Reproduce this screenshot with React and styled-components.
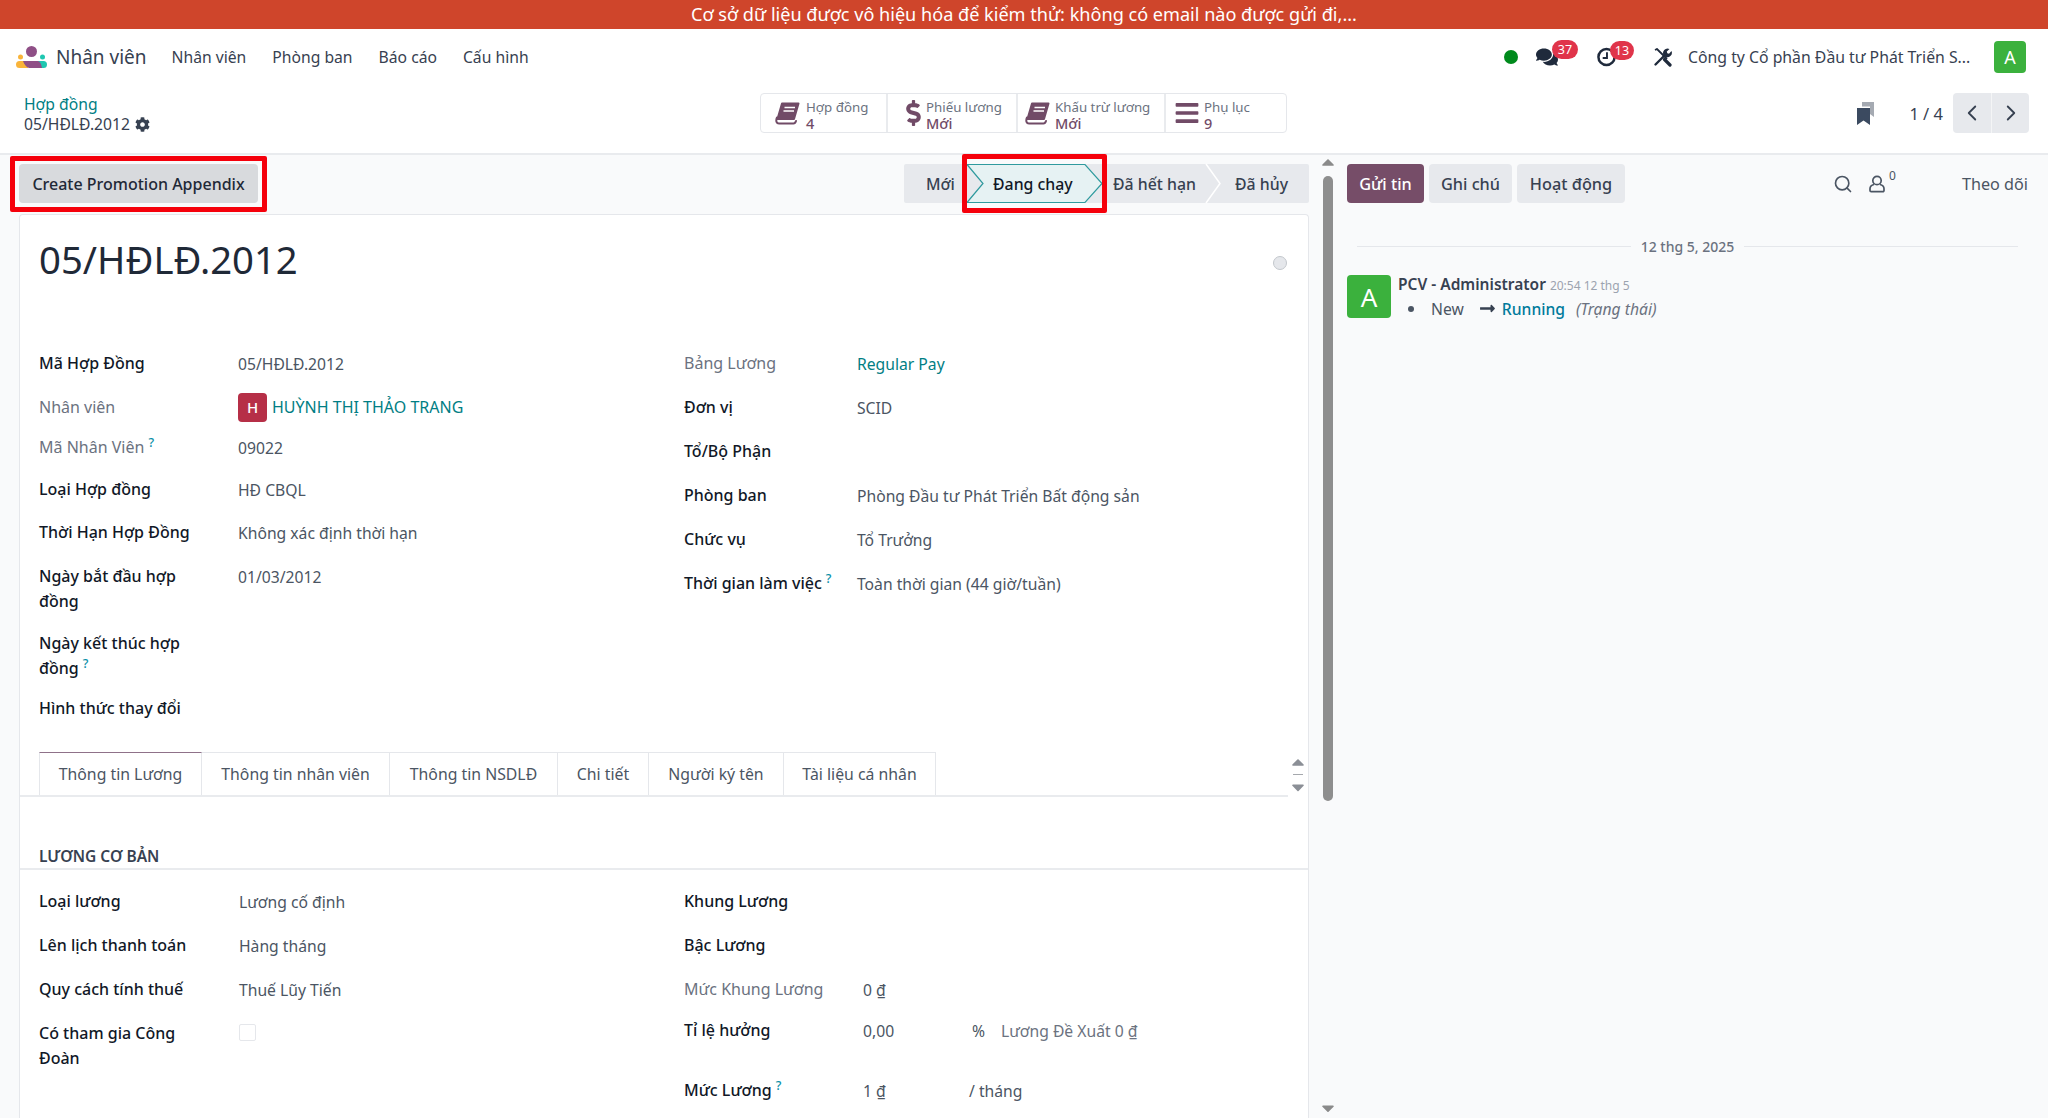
import React from "react";
import styled, { createGlobalStyle } from "styled-components";
import { FaDollarSign, FaBars, FaComments, FaCog, FaLongArrowAltRight, FaCaretUp, FaCaretDown } from "react-icons/fa";
import { ChevronLeft, ChevronRight, Search } from "lucide-react";

const Global = createGlobalStyle`
  html, body { margin: 0; padding: 0; height: 100%; overflow: hidden; background: #f9fafb; }
  * { box-sizing: border-box; }
  body { font-family: "Noto Sans", "Open Sans", sans-serif; font-size: 15.7px; color: #374151; }
`;

const Page = styled.div`display: flex; flex-direction: column; width: 2048px; height: 1118px; overflow: hidden;`;
const Banner = styled.div`
  height: 29px; flex: none; background: #cf452b; color: #fff; display: flex; align-items: center; justify-content: center; font-size: 18.1px; line-height: 29px;
`;
const NavBar = styled.nav`
  height: 56px; flex: none; background: #fff; display: flex; align-items: center; padding: 0 22px 0 16px;
`;
const Brand = styled.div`display: flex; align-items: center; gap: 9px; font-size: 19px; color: #374151; margin-right: 25px;`;
const MenuItem = styled.span`margin-right: 26px; font-size: 15.7px; color: #374151;`;
const NavRight = styled.div`margin-left: auto; display: flex; align-items: center;`;
const StatusDot = styled.span`width: 14px; height: 14px; border-radius: 50%; background: #008a1c; margin-right: 18px;`;
const NavIcon = styled.span`position: relative; display: inline-flex; width: ${p => p.$w}px; margin-right: ${p => p.$mr}px; color: #1f2a3c; font-size: ${p => p.$size || 22}px; align-items: center;`;
const Badge = styled.span`
  position: absolute; top: -6px; left: ${p => p.$left}px; height: 19px; min-width: ${p => p.$w}px; border-radius: 10px; background: #e0344a; color: #fff;
  font-size: 12.5px; line-height: 19px; text-align: center;
`;
const Company = styled.span`font-size: 15.8px; color: #374151; width: 306px; white-space: nowrap;`;
const SquareAvatar = styled.span`
  width: ${p => p.$s}px; height: ${p => p.$h || p.$s}px; flex: none; background: ${p => p.$bg || "#3bb13d"}; color: #fff; border-radius: 4px; display: flex; align-items: center; justify-content: center;
  font-size: ${p => p.$fs}px; font-weight: ${p => p.$fw || 400};
`;

const ControlPanel = styled.div`
  height: 70px; flex: none; background: #fff; border-bottom: 2px solid #e9ebee; display: flex; align-items: flex-start; padding: 8px 19px 0 24px; position: relative;
`;
const Crumbs = styled.div`width: 736px; margin-top: 1px; display: flex; flex-direction: column; line-height: 20px; font-size: 15.7px;`;
const CrumbLink = styled.span`color: #017e84;`;
const CrumbCurrent = styled.span`display: flex; align-items: center; gap: 5px; color: #374151;`;
const StatGroup = styled.div`display: flex; height: 40px; width: 527px; border: 1px solid #e5e7eb; border-radius: 4px; background: #fff;`;
const StatButton = styled.div`
  width: ${p => p.$w}px; display: flex; align-items: center; padding-left: ${p => p.$pl}px; color: #714b67;
  & + & { border-left: 2px solid #e9ebee; }
`;
const StatIcon = styled.span`width: ${p => p.$w}px; flex: none; display: flex; align-items: center; font-size: ${p => p.$size || 24}px;`;
const StatText = styled.div`display: flex; flex-direction: column; font-size: 13.3px; line-height: 16px; color: #6b7280; padding-top: 4px;`;
const StatValue = styled.span`color: #714b67; font-weight: 500; font-size: 14.5px;`;
const PanelRight = styled.div`margin-left: auto; display: flex; align-items: center;`;
const BookmarkWrap = styled.span`display: inline-flex; margin-right: 35px;`;
const PagerText = styled.span`font-size: 16.5px; color: #374151; margin-right: 10px;`;
const Pager = styled.div`display: flex; height: 40px; border-radius: 4px; overflow: hidden; background: #e7e9ed;`;
const PagerBtn = styled.span`
  width: 38px; display: flex; align-items: center; justify-content: center; color: #374151;
  & + & { border-left: 1px solid #f4f5f6; }
`;

const Body = styled.div`flex: 1; display: flex; min-height: 0;`;
const Main = styled.div`width: 1322px; flex: none; padding: 0 13px 0 19px; display: flex; flex-direction: column;`;
const StatusRow = styled.div`height: 59px; flex: none; display: flex; align-items: flex-start; justify-content: space-between; padding-top: 9px;`;
const Annotated = styled.div`
  position: relative; display: flex;
  &::after {
    content: ""; position: absolute; pointer-events: none; border: 5px solid #f5000b; border-radius: 2px;
    top: ${p => p.$t}px; bottom: ${p => p.$b}px; left: ${p => p.$x}px; right: ${p => p.$x}px;
  }
`;
const ActionBtn = styled.button`
  height: 39px; width: 239px; border: 0; border-radius: 4px; background: #d8dadd; color: #1f2937; font: 500 16px "Noto Sans", sans-serif; padding: 0;
`;
const StatusBar = styled.div`display: flex; height: 39px; width: 405px; background: #e7e9ed; border-radius: 2px;`;
const Stage = styled.span`
  position: relative; width: ${p => p.$w}px; display: flex; align-items: center; padding-left: ${p => p.$pl}px; font-size: 15.85px; color: #374151; font-weight: 500;
`;
const ActiveStage = styled(Stage)`color: #111827;`;
const StageArt = styled.svg`position: absolute; left: ${p => p.$l}px; top: 0; overflow: visible;`;
const StageText = styled.span`position: relative;`;

const Sheet = styled.div`flex: 1; min-height: 0; background: #fff; border: 1px solid #e5e7eb; border-bottom: 0; border-radius: 4px 4px 0 0; padding-top: 0;`;
const TitleRow = styled.div`height: 136px; display: flex; justify-content: space-between; padding: 20px 21px 0 19px;`;
const Title = styled.h1`margin: 0; font-size: 38.3px; font-weight: 400; line-height: 48px; color: #1f2937;`;
const Priority = styled.span`width: 14px; height: 14px; border-radius: 50%; background: #e5e7eb; border: 1px solid #c3c7cc; margin-top: 21px;`;
const Columns = styled.div`display: grid; grid-template-columns: 645px 1fr; padding-left: 19px; height: ${p => p.$h}px;`;
const Col = styled.div`display: flex; flex-direction: column;`;
const Row = styled.div`display: grid; grid-template-columns: ${p => p.$lw}px 1fr; height: ${p => p.$h}px; line-height: 25px;`;
const Label = styled.div`
  color: ${p => (p.$muted ? "#6b7280" : "#111827")}; font-weight: ${p => (p.$muted ? 400 : 500)}; font-size: 16px;
`;
const LabelLine = styled.div`white-space: nowrap;`;
const Help = styled.sup`color: #0a8fa8; font-size: 12.5px; font-weight: 500; margin-left: 4px; line-height: 0;`;
const Value = styled.div`color: #4b5563; padding-top: 1px; font-size: 15.7px; display: flex; align-items: flex-start;`;
const LinkValue = styled(Value)`color: #017e84;`;
const EmployeeCell = styled.div`display: flex; align-items: center; gap: 5px; color: #017e84; margin-top: -3px; height: 29px; font-size: 16px;`;
const TabsWrap = styled.div`display: flex; align-items: stretch; height: 45px;`;
const Tabs = styled.div`flex: 1; display: flex; padding-left: 19px; border-bottom: 2px solid #e9ebee;`;
const Tab = styled.div`
  width: ${p => p.$w}px; display: flex; align-items: center; justify-content: center; font-size: 15.8px; color: #4b5563; border: 1px solid #e5e7eb; border-left-width: ${p => (p.$first ? 1 : 0)}px; border-bottom: 0; background: #fff;
  border-top-color: ${p => (p.$active ? "#8f7189" : "#e5e7eb")};
`;
const TabScroll = styled.div`width: 20px; display: flex; flex-direction: column; align-items: center; justify-content: center; color: #8b8f96; font-size: 22px; line-height: 0;`;
const TabDash = styled.span`width: 10px; height: 2px; background: #a5a8ad; margin: 1.500px 0;`;
const SectionHead = styled.div`
  height: 73px; margin-bottom: 19px; border-bottom: 2px solid #e9ebee; padding: 0 0 0 19px; display: flex; align-items: flex-end; font-size: 15.5px; font-weight: 600; color: #374151; line-height: 23px;
`;
const Checkbox = styled.span`width: 17px; height: 17px; border: 1px solid #e5e7eb; background: #fff; border-radius: 2px; margin-top: 2px;`;
const AmountCell = styled.span`width: ${p => p.$w}px; flex: none;`;
const Muted = styled.span`color: #6b7280;`;

const ScrollBar = styled.div`width: 12px; flex: none; display: flex; flex-direction: column; align-items: center; color: #8a8a8a; font-size: 20px; line-height: 0; margin-top: -3px;`;
const Thumb = styled.div`width: 10px; height: 625px; flex: none; border-radius: 5px; background: #8e8e8e; margin: 4px 0 297px;`;

const Chatter = styled.aside`flex: 1; min-width: 0; padding: 9px 20px 0 13px; display: flex; flex-direction: column;`;
const ChatTop = styled.div`display: flex; align-items: center; height: 39px; gap: 5px;`;
const ChatBtn = styled.span`
  height: 39px; width: ${p => p.$w}px; justify-content: center; border-radius: 4px; display: flex; align-items: center; font-size: 16.3px; font-weight: 500;
  background: ${p => (p.$primary ? "#764d68" : "#e7e9ed")}; color: ${p => (p.$primary ? "#fff" : "#374151")};
`;
const ChatRight = styled.div`margin-left: auto; display: flex; align-items: center; color: #4b5563;`;
const Followers = styled.span`display: inline-flex; align-items: center; position: relative; margin-left: 16px; margin-right: 77px;`;
const FollowCount = styled.span`position: absolute; left: 20px; top: -5px; font-size: 12px; line-height: 12px;`;
const FollowText = styled.span`font-size: 16.2px; color: #4b5563;`;
const DateRow = styled.div`display: flex; align-items: center; gap: 10px; margin: 32px 10px 0; height: 22px; font-size: 14px; color: #6b7280; font-weight: 500;`;
const DateLine = styled.span`flex: 1; height: 1px; background: #e5e7eb;`;
const Message = styled.div`display: flex; gap: 7px; margin-top: 18px;`;
const MsgBody = styled.div`display: flex; flex-direction: column; margin-top: -1px;`;
const MsgHead = styled.div`display: flex; align-items: baseline; gap: 4px; height: 20px; line-height: 20px;`;
const Author = styled.span`font-weight: 600; font-size: 15.5px; color: #374151;`;
const Stamp = styled.span`font-size: 12px; color: #9ca3af;`;
const Track = styled.div`display: flex; align-items: center; margin-top: 2px; height: 25px; font-size: 15.7px; color: #4b5563; padding-left: 10px;`;
const Bullet = styled.span`width: 6px; height: 6px; border-radius: 50%; background: #4b5563; margin-right: 17px;`;
const TrackArrow = styled.span`display: inline-flex; margin: 0 6px 0 15px; color: #374151; font-size: 17px;`;
const TrackNew = styled.span`color: #017a9b; font-weight: 500;`;
const TrackField = styled.em`margin-left: 11px; color: #6b7280;`;

const BrandIcon = () => (
  <svg width="31" height="22" viewBox="0 0 31 22">
    <circle cx="15.5" cy="5.500" r="5.500" fill="#8f4f86" />
    <circle cx="4.5" cy="11" r="2.500" fill="#f9b43a" />
    <circle cx="26.5" cy="11" r="2.500" fill="#1fc7b1" />
    <path d="M3.500 15H12V22H3.500a3.500 3.500 0 0 1 0-7z" fill="#f9b43a" />
    <path d="M20 15h7.500a3.500 3.500 0 0 1 0 7H20z" fill="#1fc7b1" />
    <path d="M7 15h14c3 0 4 2.500 5 7H13c-3-.8-5-4-6-7z" fill="#8f4f86" />
  </svg>
);
const BookIcon = () => (
  <svg width="25" height="23" viewBox="0 0 25 23">
    <path d="M7 1.500H23.500L19 17H2.500z" fill="currentColor" stroke="currentColor" strokeWidth="2" strokeLinejoin="round" />
    <path d="M2 15.500C.5 19 1.500 21.500 4 21.500H18.500C20 21.500 20.500 20.500 21 19" fill="none" stroke="currentColor" strokeWidth="2" strokeLinecap="round" />
    <path d="M9.500 5.500H20M8.500 9H19" stroke="#fff" strokeWidth="1.500" />
  </svg>
);
const ClockIcon = () => (
  <svg width="20" height="20" viewBox="0 0 20 20">
    <circle cx="10" cy="10" r="8.500" fill="none" stroke="currentColor" strokeWidth="2.600" />
    <path d="M10.500 5v6H6" fill="none" stroke="currentColor" strokeWidth="2" />
  </svg>
);
const ToolsIcon = () => (
  <svg width="19" height="19" viewBox="0 0 19 19">
    <path d="M2 2l2-1 5 5 5 5" fill="none" stroke="currentColor" strokeWidth="1.800" />
    <path d="M11.500 11.500L17 17" stroke="currentColor" strokeWidth="3.200" strokeLinecap="round" />
    <path d="M2.500 16.500L12 7" stroke="currentColor" strokeWidth="2.400" strokeLinecap="round" />
    <path d="M10.800 7.500A4.500 4.500 0 0 1 16.500 1L13.800 3.500l.5 1.700 1.700.5L18.500 3a4.500 4.500 0 0 1-6.300 5.700z" fill="currentColor" />
  </svg>
);
const Bookmarks = () => (
  <svg width="17" height="23" viewBox="0 0 17 23">
    <path d="M5 0h12v15l-4-3V4.500H5z" fill="#a5aab2" />
    <path d="M0 6h13v17l-6.500-4.500L0 23z" fill="#3b4a60" />
  </svg>
);
const UserIcon = () => (
  <svg width="16" height="18" viewBox="0 0 16 18" fill="none" stroke="currentColor" strokeWidth="1.700">
    <circle cx="8" cy="5.500" r="4.200" />
    <path d="M5 9.500C2.500 10 1 11.800 1 13.800V15.500a1.200 1.200 0 0 0 1.200 1.200H13.800A1.200 1.200 0 0 0 15 15.500V13.800C15 11.800 13.500 10 11 9.500" />
  </svg>
);
const ChevronBox = ({ w, fill, stroke }) => (
  <StageArt $l={0} width={w} height="39" viewBox={`0 0 ${w} 39`}>
    <path d={`M0 .5H${w - 17}L${w} 19.5L${w - 17} 38.500H0L16 19.500z`} fill={fill} stroke={stroke} strokeWidth="1.200" />
  </StageArt>
);
const Divider = () => (
  <StageArt $l={-1} width="16" height="39" viewBox="0 0 16 39">
    <path d="M0 0L14 19.500L0 39" fill="none" stroke="#fff" strokeWidth="1.500" />
  </StageArt>
);

const leftRows = [
  { lines: ["Mã Hợp Đồng"], value: "05/HĐLĐ.2012", h: 44 },
  { lines: ["Nhân viên"], muted: true, employee: true, h: 40 },
  { lines: ["Mã Nhân Viên"], muted: true, help: true, value: "09022", h: 42 },
  { lines: ["Loại Hợp đồng"], value: "HĐ CBQL", h: 43 },
  { lines: ["Thời Hạn Hợp Đồng"], value: "Không xác định thời hạn", h: 44 },
  { lines: ["Ngày bắt đầu hợp", "đồng"], value: "01/03/2012", h: 67 },
  { lines: ["Ngày kết thúc hợp", "đồng"], help: true, h: 65 },
  { lines: ["Hình thức thay đổi"], h: 30 },
];
const rightRows = [
  { lines: ["Bảng Lương"], muted: true, link: "Regular Pay" },
  { lines: ["Đơn vị"], value: "SCID" },
  { lines: ["Tổ/Bộ Phận"] },
  { lines: ["Phòng ban"], value: "Phòng Đầu tư Phát Triển Bất động sản" },
  { lines: ["Chức vụ"], value: "Tổ Trưởng" },
  { lines: ["Thời gian làm việc"], help: true, value: "Toàn thời gian (44 giờ/tuần)" },
];
const payRows = [
  { lines: ["Loại lương"], value: "Lương cố định" },
  { lines: ["Lên lịch thanh toán"], value: "Hàng tháng" },
  { lines: ["Quy cách tính thuế"], value: "Thuế Lũy Tiến" },
  { lines: ["Có tham gia Công", "Đoàn"], check: true },
];
const tabs = [
  ["Thông tin Lương", 163], ["Thông tin nhân viên", 188], ["Thông tin NSDLĐ", 168],
  ["Chi tiết", 91], ["Người ký tên", 135], ["Tài liệu cá nhân", 152],
];

const FieldLabel = ({ r }) => (
  <Label $muted={r.muted}>
    {r.lines.map((line, i) => (
      <LabelLine key={line}>{line}{r.help && i === r.lines.length - 1 && <Help>?</Help>}</LabelLine>
    ))}
  </Label>
);

export default function App() {
  return (
    <Page>
      <Global />
      <Banner>Cơ sở dữ liệu được vô hiệu hóa để kiểm thử: không có email nào được gửi đi,...</Banner>
      <NavBar>
        <Brand><BrandIcon />Nhân viên</Brand>
        <MenuItem>Nhân viên</MenuItem>
        <MenuItem>Phòng ban</MenuItem>
        <MenuItem>Báo cáo</MenuItem>
        <MenuItem>Cấu hình</MenuItem>
        <NavRight>
          <StatusDot />
          <NavIcon $w={24} $mr={37}><FaComments /><Badge $left={16} $w={26}>37</Badge></NavIcon>
          <NavIcon $w={19} $mr={37}><ClockIcon /><Badge $left={13} $w={24}>13</Badge></NavIcon>
          <NavIcon $w={19} $mr={16}><ToolsIcon /></NavIcon>
          <Company>Công ty Cổ phần Đầu tư Phát Triển S...</Company>
          <SquareAvatar $s={32} $fs={18}>A</SquareAvatar>
        </NavRight>
      </NavBar>
      <ControlPanel>
        <Crumbs>
          <CrumbLink>Hợp đồng</CrumbLink>
          <CrumbCurrent>05/HĐLĐ.2012 <FaCog size={15} /></CrumbCurrent>
        </Crumbs>
        <StatGroup>
          <StatButton $w={125} $pl={14}><StatIcon $w={31}><BookIcon /></StatIcon><StatText>Hợp đồng<StatValue>4</StatValue></StatText></StatButton>
          <StatButton $w={130} $pl={13}><StatIcon $w={25} $size={26}><FaDollarSign /></StatIcon><StatText>Phiếu lương<StatValue>Mới</StatValue></StatText></StatButton>
          <StatButton $w={148} $pl={7}><StatIcon $w={30}><BookIcon /></StatIcon><StatText>Khấu trừ lương<StatValue>Mới</StatValue></StatText></StatButton>
          <StatButton $w={122} $pl={8}><StatIcon $w={30} $size={26}><FaBars /></StatIcon><StatText>Phụ lục<StatValue>9</StatValue></StatText></StatButton>
        </StatGroup>
        <PanelRight>
          <BookmarkWrap><Bookmarks /></BookmarkWrap>
          <PagerText>1 / 4</PagerText>
          <Pager>
            <PagerBtn><ChevronLeft size={26} strokeWidth={1.7} /></PagerBtn>
            <PagerBtn><ChevronRight size={26} strokeWidth={1.7} /></PagerBtn>
          </Pager>
        </PanelRight>
      </ControlPanel>
      <Body>
        <Main>
          <StatusRow>
            <Annotated $t={-8} $b={-9} $x={-9}><ActionBtn>Create Promotion Appendix</ActionBtn></Annotated>
            <StatusBar>
              <Stage $w={63} $pl={22}>Mới</Stage>
              <Annotated $t={-10} $b={-10} $x={-5}>
                <ActiveStage $w={135} $pl={26}>
                  <ChevronBox w={135} fill="#e6f2f3" stroke="#2f9a9e" />
                  <StageText>Đang chạy</StageText>
                </ActiveStage>
              </Annotated>
              <Stage $w={105} $pl={11}><StageText>Đã hết hạn</StageText></Stage>
              <Stage $w={102} $pl={28}><Divider /><StageText>Đã hủy</StageText></Stage>
            </StatusBar>
          </StatusRow>
          <Sheet>
            <TitleRow><Title>05/HĐLĐ.2012</Title><Priority /></TitleRow>
            <Columns $h={401}>
              <Col>
                {leftRows.map(r => (
                  <Row key={r.lines[0]} $lw={199} $h={r.h}>
                    <FieldLabel r={r} />
                    {r.employee ? (
                      <Value><EmployeeCell><SquareAvatar $s={29} $bg="#b62f47" $fs={15} $fw={500}>H</SquareAvatar>HUỲNH THỊ THẢO TRANG</EmployeeCell></Value>
                    ) : <Value>{r.value}</Value>}
                  </Row>
                ))}
              </Col>
              <Col>
                {rightRows.map(r => (
                  <Row key={r.lines[0]} $lw={173} $h={44}>
                    <FieldLabel r={r} />
                    {r.link ? <LinkValue>{r.link}</LinkValue> : <Value>{r.value}</Value>}
                  </Row>
                ))}
              </Col>
            </Columns>
            <TabsWrap>
              <Tabs>
                {tabs.map(([t, w], i) => <Tab key={t} $w={w} $first={i === 0} $active={i === 0}>{t}</Tab>)}
              </Tabs>
              <TabScroll><FaCaretUp /><TabDash /><FaCaretDown /></TabScroll>
            </TabsWrap>
            <SectionHead>LƯƠNG CƠ BẢN</SectionHead>
            <Columns $h={230}>
              <Col>
                {payRows.map(r => (
                  <Row key={r.lines[0]} $lw={200} $h={44}>
                    <FieldLabel r={r} />
                    {r.check ? <Value><Checkbox /></Value> : <Value>{r.value}</Value>}
                  </Row>
                ))}
              </Col>
              <Col>
                <Row $lw={179} $h={44}><Label>Khung Lương</Label><Value /></Row>
                <Row $lw={179} $h={44}><Label>Bậc Lương</Label><Value /></Row>
                <Row $lw={179} $h={41}><Label $muted>Mức Khung Lương</Label><Value>0 ₫</Value></Row>
                <Row $lw={179} $h={60}>
                  <Label>Tỉ lệ hưởng</Label>
                  <Value><AmountCell $w={109}>0,00</AmountCell><AmountCell $w={29}>%</AmountCell><Muted>Lương Đề Xuất 0 ₫</Muted></Value>
                </Row>
                <Row $lw={179} $h={40}>
                  <FieldLabel r={{ lines: ["Mức Lương"], help: true }} />
                  <Value><AmountCell $w={106}>1 ₫</AmountCell>/ tháng</Value>
                </Row>
              </Col>
            </Columns>
          </Sheet>
        </Main>
        <ScrollBar>
          <FaCaretUp />
          <Thumb />
          <FaCaretDown />
        </ScrollBar>
        <Chatter>
          <ChatTop>
            <ChatBtn $primary $w={77}>Gửi tin</ChatBtn>
            <ChatBtn $w={83}>Ghi chú</ChatBtn>
            <ChatBtn $w={108}>Hoạt động</ChatBtn>
            <ChatRight>
              <Search size={20} />
              <Followers><UserIcon /><FollowCount>0</FollowCount></Followers>
              <FollowText>Theo dõi</FollowText>
            </ChatRight>
          </ChatTop>
          <DateRow><DateLine />12 thg 5, 2025<DateLine /></DateRow>
          <Message>
            <SquareAvatar $s={44} $h={43} $fs={26}>A</SquareAvatar>
            <MsgBody>
              <MsgHead><Author>PCV - Administrator</Author><Stamp>20:54 12 thg 5</Stamp></MsgHead>
              <Track>
                <Bullet />New
                <TrackArrow><FaLongArrowAltRight /></TrackArrow>
                <TrackNew>Running</TrackNew>
                <TrackField>(Trạng thái)</TrackField>
              </Track>
            </MsgBody>
          </Message>
        </Chatter>
      </Body>
    </Page>
  );
}
